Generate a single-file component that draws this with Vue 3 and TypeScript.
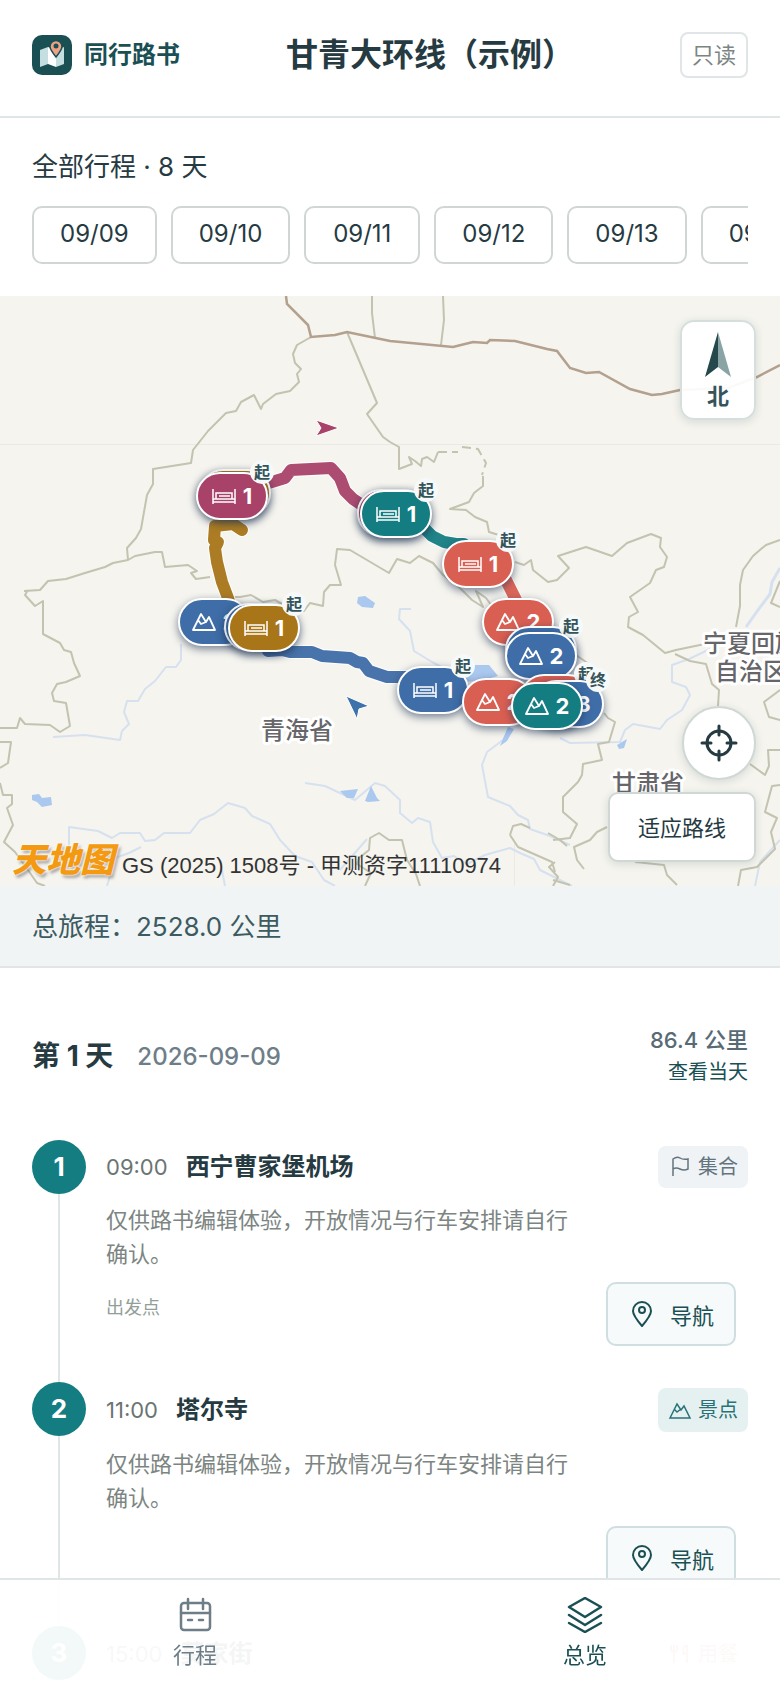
<script setup lang="ts">
type IconName = 'bed' | 'peak' | 'flag' | 'meal'

interface Marker {
  x: number
  y: number
  color: string
  icon?: IconName
  count?: number
  badge?: string
}

interface Stop {
  order: number
  time: string
  name: string
  kind: string
  icon: IconName
  note?: string
  role?: string
}

const mapWidth = 780
const mapHeight = 590

const amber = '#a87518'
const rose = '#a84268'
const teal = '#147d82'
const coral = '#d95f52'
const blue = '#3e6da7'

const dates = ['09/09', '09/10', '09/11', '09/12', '09/13', '09/14']

// Markers without an icon are stacked beneath the next one in the list.
const markers: Marker[] = [
  { x: 235, y: 197, color: amber },
  { x: 232, y: 200, color: rose, icon: 'bed', count: 1, badge: '起' },
  { x: 393, y: 217, color: rose },
  { x: 396, y: 218, color: teal, icon: 'bed', count: 1, badge: '起' },
  { x: 478, y: 268, color: coral, icon: 'bed', count: 1, badge: '起' },
  { x: 214, y: 326, color: blue, icon: 'peak', count: 2 },
  { x: 260, y: 331, color: blue },
  { x: 264, y: 332, color: amber, icon: 'bed', count: 1, badge: '起' },
  { x: 518, y: 326, color: coral, icon: 'peak', count: 2 },
  { x: 541, y: 354, color: blue, badge: '起' },
  { x: 541, y: 360, color: blue, icon: 'peak', count: 2 },
  { x: 433, y: 394, color: blue, icon: 'bed', count: 1, badge: '起' },
  { x: 498, y: 406, color: coral, icon: 'peak', count: 2 },
  { x: 556, y: 402, color: coral, badge: '起' },
  { x: 568, y: 408, color: blue, icon: 'peak', count: 3, badge: '终' },
  { x: 547, y: 410, color: teal, icon: 'peak', count: 2 },
]

const routes = [
  { color: amber, path: 'M242 530 L233 524 L215 526 L214 540 L218 542 L215 548 L217 562 L222 582 L228 598 L234 618' },
  { color: rose, path: 'M262 485 L285 478 L291 470 L331 468 L340 478 L345 491 L353 499 L372 512' },
  { color: teal, path: 'M420 524 L432 536 L444 542 L456 544 L464 544' },
  { color: coral, path: 'M506 580 L522 612' },
  { color: blue, path: 'M268 651 L282 650 L290 652 L312 652 L322 656 L350 658 L357 662 L363 663 L369 671 L387 677 L410 677 L420 682' },
]

const stops: Stop[] = [
  { order: 1, time: '09:00', name: '西宁曹家堡机场', kind: '集合', icon: 'flag', note: '仅供路书编辑体验，开放情况与行车安排请自行确认。', role: '出发点' },
  { order: 2, time: '11:00', name: '塔尔寺', kind: '景点', icon: 'peak', note: '仅供路书编辑体验，开放情况与行车安排请自行确认。' },
  { order: 3, time: '15:00', name: '莫家街', kind: '用餐', icon: 'meal' },
]

function markerStyle(m: Marker) {
  return {
    left: `${(m.x / mapWidth) * 100}%`,
    top: `${(m.y / mapHeight) * 100}%`,
    backgroundColor: m.color,
  }
}
</script>

<template>
  <div class="page">
    <header class="topbar">
      <a class="brand" href="#">
        <svg class="logo" viewBox="0 0 40 40" aria-hidden="true">
          <rect width="40" height="40" rx="10" fill="#1a5054" />
          <path d="M8 15 L16 12 V29 L8 32 Z M24 15 L32 12 V29 L24 32 Z" fill="#c5dfe1" />
          <path d="M16 12 L24 15 V32 L16 29 Z" fill="#fff" />
          <path d="M24 22 C20 17 18 14 18 11.500 A6 6 0 0 1 30 11.500 C30 14 28 17 24 22 Z" fill="#f0a184" stroke="#1a5054" stroke-width="1.500" />
          <circle cx="24" cy="11" r="2.500" fill="#1a5054" />
        </svg>
        <span>同行路书</span>
      </a>
      <h1>甘青大环线（示例）</h1>
      <span class="readonly">只读</span>
    </header>

    <section class="days">
      <h2>全部行程 · 8 天</h2>
      <div class="chips">
        <button v-for="d in dates" :key="d" type="button" class="chip">{{ d }}</button>
      </div>
    </section>

    <section class="map" aria-label="路线地图">
      <svg class="canvas" viewBox="0 296 780 590" preserveAspectRatio="none" aria-hidden="true">
        <path d="M0 444.500 H780 M514.500 842 V886" stroke="#eae9e5" fill="none" />
        <g class="river">
          <path d="M181 644 V660 L176 667 L166 667 L155 681 L145 689 L138 701 H127 L124 712 L129 724 L122 731 L120 740 L85 735 L53 737" />
          <path d="M69 850 V827 L98 831 L112 838 L120 833 L140 833 L145 841 L155 840 L164 833 H190 L200 820 L214 814 L228 803 L245 808 L252 816 L270 824 L280 840 L295 856 L312 862 L324 880 L335 886" />
          <path d="M107 886 L115 858 L129 853 L141 847" />
          <path d="M305 783 L325 786 L342 794 L355 800 L375 783 L385 786 L400 800 L400 813 L412 823 L418 818 L430 822 L433 842 L442 858 L454 856 L467 864 L485 855 L510 848 L520 853 L534 859 L540 870 L572 886" />
          <path d="M510 727 L503 740 L487 752 L482 765 L488 797 L510 806 L518 815 L528 820 L530 829 L550 836 L570 845" />
          <path d="M560 738 L570 743 L620 742 L625 730 L633 724 L660 729 L667 720 L682 710 L690 695 L686 687 L672 682 V665 L689 659 L710 649" />
          <path d="M780 568 L772 582 L770 594 L758 610 L746 627" stroke-width="3" />
          <path d="M411 609 L400 609 L399 619 L410 631 L414 651 L432 662 L449 671 L470 674" />
          <path d="M340 870 L367 839 M222 870 L225 886 M780 840 L760 862 L755 886" />
        </g>
        <g fill="#abc8ef">
          <path d="M358 597 L365 596 L375 603 L373 608 L362 607 L357 603 Z" />
          <path d="M32 795 L39 794 L42 798 L51 797 L52 805 L42 807 L37 802 L32 800 Z" />
          <path d="M340 791 L358 789 L354 798 L347 798 Z M365 801 L371 786 L377 798 L380 801 L368 802 Z" />
          <path d="M463 672 L475 665 L489 665 L498 676 L480 681 L464 682 Z" />
          <path d="M508 727 L514 729 L507 741 L500 746 Z M617 745 L627 739 L624 748 L619 749 Z" />
        </g>
        <g class="border">
          <path d="M372 296 V313 L375 338 M443 296 L444 320 L441 345" />
          <path d="M311 337 L297 345 L293 354 L295 363 L301 369 L297 374 L299 382 L290 391 L276 394 L263 404 L261 409 L254 395 L241 402 L236 411 L226 413 L208 431 L193 450 L191 463 L153 469 V484 L147 495 L141 529 L136 538 L127 548 L128 560" />
          <path d="M24 591 L40 590 L48 581 L66 579 L85 573 L105 567 L113 563 L128 560 L135 556 L155 552 L162 552 L165 567 L188 565 L197 571 L191 573 L196 579 L210 577" />
          <path d="M28 590 L25 595 L35 606 L43 601 V634 L60 643 L64 650 L71 652 L74 663 L80 676 L66 682 L57 684 L52 693 L54 701 L66 703 L70 726 L60 732 L50 725 L25 724 L20 718 L17 728 L0 728" />
          <path d="M0 742 H11 L8 763 L0 768 M0 783 L3 795 L12 795 L12 804 L7 808 L13 825 L4 842 L15 852 L28 870 L37 883 L45 886" />
          <path d="M347 332 L377 403 L367 414 L383 437 L390 442 L399 447 V469 L412 464 L409 457 L415 461 L421 466 L422 459 L427 457 L434 462 L438 452" />
          <path d="M438 452 L458 452 M462 447 L478 449 L486 463 L482 475" stroke-dasharray="9 5" />
          <path d="M483 476 V486 L474 493 L469 502 L450 509 L466 510 L475 517 L487 522 L489 532 L502 536 M515 562 L524 565 L531 560 L533 570 L548 582 L557 580 L569 568 L558 556 L586 547 L612 556 L627 543 L651 534 L661 538 L660 547 L667 557 L664 567 L656 570 L650 583 L630 597 L638 612 L629 617 L628 627 L643 635 L665 653 L676 650 L700 645 L735 643" />
          <path d="M226 597 L240 597 L251 595 L263 602 L275 600 L290 608 L304 611 L310 603 L323 606 L324 592 L330 585 L341 585 L335 565 L337 549 L350 550 L389 573 L397 559 L410 563 L419 556 L433 563 L443 575 L460 588 L472 600 L483 607 L476 591 L486 598 L492 606" />
          <path d="M780 540 L766 545 L761 549 L753 556 L743 570 L740 585 V606 L736 627 M780 581 L771 603 L780 607" />
          <path d="M573 653 L589 664 L600 672 M604 713 L608 718 L615 722 L609 742 L598 744 L602 760 L583 764 L582 775 L578 782 L563 797 L563 812 L577 824 L570 838 L553 840" />
          <path d="M675 654 L690 661 L706 664 L712 684 L719 690 L718 706 M780 690 L764 702 L769 717 L780 720 M750 764 L765 775 L769 766 L768 750 L780 750 M780 785 L772 786 L765 812 L777 818 L771 832 L775 849 L757 867 L741 870 L738 886" />
          <path d="M607 827 L597 832 L590 840 L574 847 L577 860 L584 869 M553 880 L570 885 M555 862 L549 867 L558 877 L553 886" />
          <path d="M510 835 L513 826 L521 824 L530 828 M548 833 L560 840 L567 846 M510 835 L518 847 L543 858 L552 862 L555 872" />
          <path d="M365 886 L371 873 L357 864 L359 858 L369 850 L370 838 L379 833 L389 840 L402 840 L407 860 L416 874 L420 886 M635 862 L664 865 L667 875 L677 885" />
        </g>
        <path d="M286 296 L287 304 L308 325 L311 337 L335 335 L347 332 L390 341 L453 347 L473 342 L487 343 L490 340 L515 341 L547 349 L557 351 L570 368 L586 373 L599 372 L630 389 L652 395 L662 394 L680 390 L728 388 L757 377 L780 365" fill="none" stroke="#b3a08d" stroke-width="2.500" />
        <g class="place">
          <text x="261" y="739">青海省</text>
          <text x="612" y="792">甘肃省</text>
          <text x="703" y="652">宁夏回族</text>
          <text x="715" y="680">自治区</text>
        </g>
        <g fill="none" stroke-linecap="round" stroke-linejoin="round">
          <template v-for="r in routes" :key="r.color">
            <path :d="r.path" stroke="#fff" stroke-width="14" />
            <path :d="r.path" :stroke="r.color" stroke-width="12" opacity="0.950" />
          </template>
        </g>
        <g stroke="#fff" stroke-width="1">
          <path d="M316 420 L339 428 L316 436 L321 428 Z" fill="#a84268" />
          <path d="M346 696 L369 706 L359 709 L357 719 Z" fill="#3e72aa" />
        </g>
      </svg>

      <button v-for="(m, i) in markers" :key="i" type="button" class="marker" :style="markerStyle(m)">
        <svg v-if="m.icon === 'bed'" viewBox="0 0 24 18" stroke-width="1.500" aria-hidden="true">
          <path d="M1 2 V17 M23 2 V17 M1 12 H23 M1 15 H23 M4 12 V6 H20 V12 M7 9 H18" />
        </svg>
        <svg v-else-if="m.icon === 'peak'" viewBox="0 0 24 18" stroke-width="1.800" class="peak" aria-hidden="true">
          <path d="M1 17 L9 1 L14 9 L17 4 L23 17 Z M6 7 L9 11 L14 9" />
        </svg>
        <span v-if="m.count">{{ m.count }}</span>
        <em v-if="m.badge">{{ m.badge }}</em>
      </button>

      <div class="compass">
        <svg viewBox="0 0 26 46" aria-hidden="true">
          <path d="M13 0 V35 L0 45 Z" fill="#24484c" />
          <path d="M13 0 L26 45 L13 35 Z" fill="#8aa3a5" />
        </svg>
        <strong>北</strong>
      </div>

      <div class="controls">
        <button type="button" class="locate" aria-label="定位">
          <svg viewBox="0 0 38 38" aria-hidden="true">
            <circle cx="19" cy="19" r="12" />
            <path d="M19 2 V11 M19 27 V36 M2 19 H11 M27 19 H36" />
          </svg>
        </button>
        <button type="button" class="fit">适应路线</button>
      </div>

      <div class="credit">
        <b>天地图</b>
        <span>GS (2025) 1508号 - 甲测资字11110974</span>
      </div>
    </section>

    <p class="total">总旅程：2528.0 公里</p>

    <main class="day">
      <div class="day-head">
        <h2>第 1 天</h2>
        <time>2026-09-09</time>
        <div class="day-side">
          <span>86.4 公里</span>
          <a href="#">查看当天</a>
        </div>
      </div>

      <ol class="stops">
        <li v-for="s in stops" :key="s.order" class="stop">
          <div class="rail"><span>{{ s.order }}</span></div>
          <div class="body">
            <div class="stop-head">
              <div class="stop-title">
                <time>{{ s.time }}</time>
                <h3>{{ s.name }}</h3>
              </div>
              <span class="tag" :class="s.icon">
                <svg v-if="s.icon === 'flag'" viewBox="0 0 24 26" stroke-width="1.500" aria-hidden="true">
                  <path d="M5 22 V5 Q9 2 12 4 T20 5 V15 Q16 17 12 15 T5 15" />
                </svg>
                <svg v-else-if="s.icon === 'peak'" viewBox="0 0 24 28" stroke-width="1.500" aria-hidden="true">
                  <path d="M2 22 L9 8 L13 14 L16 10 L22 22 Z M6 13 L9 16 L13 13" />
                </svg>
                <svg v-else viewBox="0 0 24 28" stroke-width="2" aria-hidden="true">
                  <path d="M3 5 V10 Q6 13 9 10 V5 M6 5 V23 M18 5 Q14 9 16 14 H19 M19 5 V23" />
                </svg>
                {{ s.kind }}
              </span>
            </div>
            <template v-if="s.note">
              <p class="note">{{ s.note }}</p>
              <div class="stop-foot">
                <span class="role">{{ s.role }}</span>
                <button type="button" class="go">
                  <svg viewBox="0 0 20 26" aria-hidden="true">
                    <path d="M10 25 C4 18 1 14 1 10 A9 9 0 0 1 19 10 C19 14 16 18 10 25 Z" />
                    <circle cx="10" cy="9" r="3" />
                  </svg>
                  导航
                </button>
              </div>
            </template>
          </div>
        </li>
      </ol>
    </main>

    <nav class="tabs">
      <a href="#" class="tab">
        <svg viewBox="0 0 36 36" stroke-width="2.500" aria-hidden="true">
          <rect x="4" y="6" width="29" height="27" rx="3" />
          <path d="M4 16 H33 M11 2 V12 M26 2 V12 M11 23 H15 M22 23 H26" />
        </svg>
        <span>行程</span>
      </a>
      <a href="#" class="tab active" aria-current="page">
        <svg viewBox="0 0 36 36" stroke-width="2.500" aria-hidden="true">
          <path d="M18 1 L34 10 L18 20 L2 10 Z M2 18 L18 28 L34 18 M2 26 L18 35 L34 26" />
        </svg>
        <span>总览</span>
      </a>
    </nav>
  </div>
</template>

<style>
body {
  background: #fff;
}
</style>

<style scoped>
.page {
  font-family: Inter, "Noto Sans CJK SC", sans-serif;
  color: #263a42;
  font-size: 22px;
}
h1, h2, h3, p, ol {
  margin: 0;
  padding: 0;
  list-style: none;
}
a {
  color: inherit;
  text-decoration: none;
}
button {
  font: inherit;
  color: inherit;
  margin: 0;
  box-sizing: border-box;
}
svg {
  flex: none;
}
.topbar {
  box-sizing: border-box;
  height: 118px;
  padding: 0 32px 6px;
  display: flex;
  align-items: center;
  border-bottom: 2px solid #e0e5e8;
}
.brand {
  display: flex;
  align-items: center;
  gap: 12px;
  color: #1a5054;
  font-size: 24px;
  font-weight: 600;
  line-height: 32px;
}
.logo {
  width: 40px;
  height: 40px;
}
h1 {
  flex: 1;
  text-align: center;
  font-size: 32px;
  font-weight: 700;
  line-height: 40px;
}
.readonly {
  padding: 5px 10px;
  border: 2px solid #e0e5e8;
  border-radius: 8px;
  line-height: 32px;
  color: #7c8582;
}
.days {
  padding: 30px 32px 32px;
}
.days h2 {
  font-size: 26px;
  line-height: 38px;
  font-weight: 400;
}
.chips {
  display: flex;
  gap: 14px;
  margin-top: 20px;
  overflow: hidden;
}
.chip {
  flex: none;
  min-width: 116px;
  height: 58px;
  padding: 0 26px 4px;
  background: #fff;
  border: 2px solid #cfd6d4;
  border-radius: 10px;
  font-size: 24px;
}
.map {
  position: relative;
  height: 590px;
  overflow: hidden;
  background: #f5f4ef;
}
.canvas {
  display: block;
  width: 100%;
  height: 100%;
}
.border path {
  fill: none;
  stroke: #c3c3b0;
  stroke-width: 2;
  stroke-linejoin: round;
}
.river path {
  fill: none;
  stroke: #d6e1f0;
  stroke-linejoin: round;
}
.river {
  stroke-width: 2;
}
.place text {
  font-size: 24px;
  font-weight: 500;
  fill: #66666a;
  stroke: #fff;
  stroke-width: 6px;
  stroke-linejoin: round;
  paint-order: stroke;
}
.marker {
  position: absolute;
  transform: translate(-50%, -50%);
  width: 72px;
  height: 48px;
  padding: 0;
  display: flex;
  align-items: center;
  justify-content: center;
  gap: 7px;
  border: 2px solid #fff;
  border-radius: 24px;
  color: #fff;
  font-size: 22px;
  font-weight: 700;
  box-shadow: 0 3px 8px rgba(30, 50, 80, 0.6);
}
.marker svg {
  width: 24px;
  height: 18px;
  fill: none;
  stroke: #fff;
}
.marker .peak {
  stroke-linejoin: round;
}
.marker em {
  position: absolute;
  right: -8px;
  top: -14px;
  width: 24px;
  height: 24px;
  border-radius: 50%;
  background: #f5f9fa;
  color: #35545a;
  font-size: 16px;
  font-style: normal;
  line-height: 24px;
  text-align: center;
}
.compass {
  position: absolute;
  right: 24px;
  top: 24px;
  width: 76px;
  height: 100px;
  box-sizing: border-box;
  display: flex;
  flex-direction: column;
  align-items: center;
  padding-top: 10px;
  gap: 2px;
  background: rgba(255, 255, 255, 0.95);
  border: 2px solid #d5e0de;
  border-radius: 14px;
  color: #35545a;
  line-height: 32px;
  box-shadow: 0 2px 8px rgba(40, 70, 70, 0.15);
}
.compass svg {
  width: 26px;
  height: 46px;
}
.controls {
  position: absolute;
  right: 24px;
  bottom: 24px;
  display: flex;
  flex-direction: column;
  align-items: flex-end;
  gap: 12px;
}
.locate, .fit {
  background: #fff;
  border: 2px solid #d0d8d6;
  box-shadow: 0 2px 8px rgba(40, 70, 70, 0.15);
}
.locate {
  width: 74px;
  height: 74px;
  padding: 0;
  display: grid;
  place-items: center;
  border-radius: 50%;
}
.locate svg {
  width: 38px;
  height: 38px;
  fill: none;
  stroke: #263a42;
  stroke-width: 3;
  stroke-linecap: round;
}
.fit {
  height: 70px;
  padding: 0 28px 2px;
  border-radius: 10px;
}
.credit {
  position: absolute;
  left: 12px;
  bottom: 4px;
  display: flex;
  align-items: flex-end;
  gap: 8px;
  font-family: "Liberation Sans", "Noto Sans CJK SC", sans-serif;
  color: #333;
  line-height: 32px;
}
.credit b {
  color: #f39a12;
  font-size: 34px;
  font-style: italic;
  font-weight: 900;
  line-height: 44px;
  text-shadow: 0 0 2px #fff, 0 0 3px #fff, 2px 3px 3px rgba(80, 80, 80, 0.5);
}
.total {
  padding: 22px 32px 20px;
  background: #f0f4f5;
  border-bottom: 2px solid #e0e5e8;
  color: #3c5a60;
  font-size: 26px;
  line-height: 38px;
}
.day {
  padding: 56px 32px 8px;
}
.day-head {
  display: flex;
  align-items: center;
  gap: 24px;
}
.day-head h2 {
  font-size: 28px;
  line-height: 40px;
}
.day-head time {
  color: #6e7e88;
  font-size: 24px;
  font-weight: 500;
  line-height: 32px;
  padding-top: 2px;
}
.day-side {
  margin-left: auto;
  display: flex;
  flex-direction: column;
  align-items: flex-end;
  line-height: 32px;
  color: #586b75;
  font-weight: 500;
}
.day-side a {
  color: #1a5054;
  font-size: 20px;
  font-weight: 400;
}
.stops {
  margin-top: 52px;
}
.stop {
  display: flex;
  gap: 20px;
}
.rail {
  flex: none;
  width: 54px;
  display: flex;
  flex-direction: column;
  align-items: center;
}
.rail span {
  width: 54px;
  height: 54px;
  border-radius: 50%;
  background: #147d82;
  color: #fff;
  font-size: 26px;
  font-weight: 700;
  line-height: 54px;
  text-align: center;
}
.rail::after {
  content: "";
  flex: 1;
  width: 2px;
  background: #e0e5e8;
}
.body {
  flex: 1;
  min-width: 0;
  padding: 6px 0 36px;
}
.stop:last-child .body {
  padding-bottom: 0;
}
.stop-head {
  display: flex;
  align-items: center;
  justify-content: space-between;
}
.stop-title {
  display: flex;
  align-items: baseline;
  gap: 18px;
  line-height: 34px;
}
.stop-title time {
  color: #6a7573;
}
.stop-title h3 {
  font-size: 24px;
  font-weight: 600;
}
.tag {
  display: flex;
  align-items: center;
  gap: 6px;
  padding: 8px 10px;
  border-radius: 8px;
  font-size: 20px;
  line-height: 26px;
}
.tag svg {
  width: 24px;
  height: 28px;
  fill: none;
  stroke: currentColor;
}
.tag.flag svg {
  height: 26px;
}
.tag.flag {
  color: #64747e;
  background: #eff3f6;
}
.tag.peak {
  color: #287278;
  background: #e5f1f1;
}
.tag.meal {
  color: #c98a70;
  background: #fdf6f1;
}
.note {
  margin: 15px 160px 0 0;
  color: #7c8582;
  line-height: 34px;
}
.stop-foot {
  display: flex;
  align-items: center;
  justify-content: space-between;
  margin: 11px 12px 0 0;
}
.role {
  color: #929e98;
  font-size: 18px;
  line-height: 26px;
  padding-bottom: 12px;
}
.go {
  width: 130px;
  height: 64px;
  padding: 0 0 0 4px;
  display: flex;
  align-items: center;
  justify-content: center;
  gap: 18px;
  background: #f6fafb;
  border: 2px solid #cfdee0;
  border-radius: 10px;
  color: #1a5054;
}
.go svg {
  width: 20px;
  height: 26px;
  fill: none;
  stroke: currentColor;
  stroke-width: 2;
}
.tabs {
  position: fixed;
  left: 0;
  right: 0;
  bottom: 0;
  height: 110px;
  box-sizing: border-box;
  display: flex;
  background: rgba(255, 255, 255, 0.95);
  border-top: 2px solid #e0e5e8;
}
.tab {
  flex: 1;
  display: flex;
  flex-direction: column;
  align-items: center;
  gap: 6px;
  padding-top: 17px;
  color: #6e7e88;
  line-height: 32px;
}
.tab.active {
  color: #1a5054;
}
.tab svg {
  width: 36px;
  height: 36px;
  fill: none;
  stroke: currentColor;
  stroke-linecap: round;
  stroke-linejoin: round;
}
</style>
